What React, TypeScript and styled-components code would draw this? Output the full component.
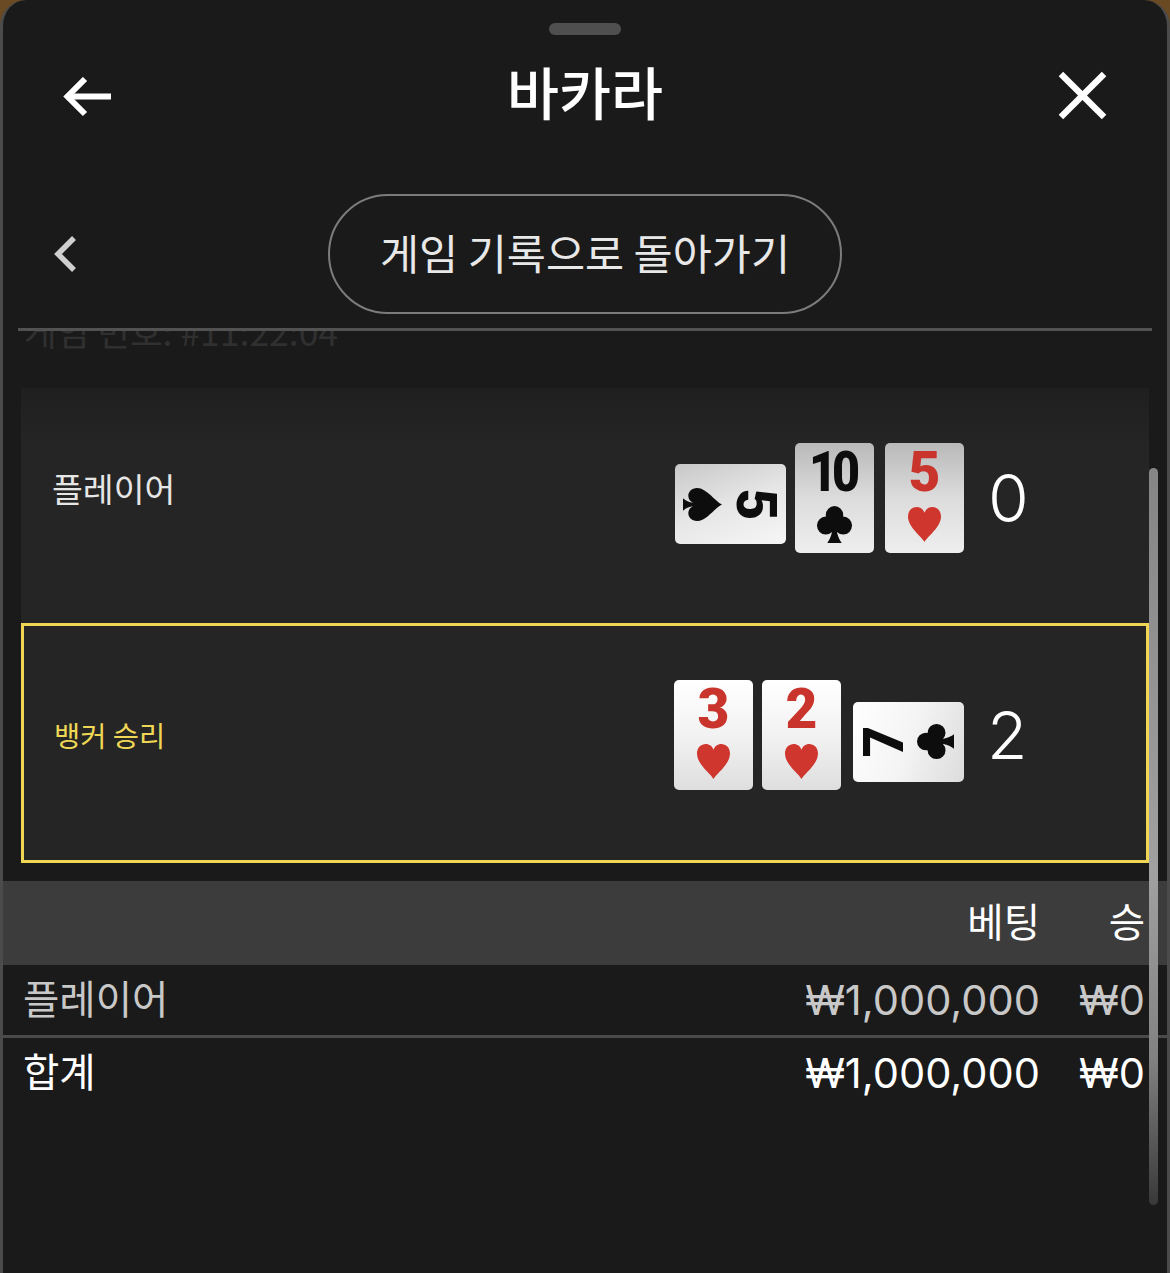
import React from 'react'
import styled, { createGlobalStyle } from 'styled-components'

const GlobalStyle = createGlobalStyle`
  html, body {
    margin: 0;
    padding: 0;
    background: #6a4a22;
    font-family: "Noto Sans CJK KR", "Noto Sans", sans-serif;
  }
  * { box-sizing: border-box; }
`

const Sheet = styled.div`
  position: relative;
  width: 1170px;
  height: 1273px;
  overflow: hidden;
  display: flex;
  flex-direction: column;
  background: #1a1a1a;
  border-left: 3px solid #4b4b4b;
  border-right: 3px solid #4b4b4b;
  border-radius: 26px 26px 0 0;
`

const Handle = styled.div`
  flex: none;
  align-self: center;
  width: 72px;
  height: 12px;
  margin-top: 23px;
  border-radius: 6px;
  background: #4f4f4f;
`

const Header = styled.header`
  flex: none;
  height: 120px;
  display: grid;
  grid-template-columns: 1fr auto 1fr;
  align-items: center;
  padding: 0 60px;
`

const Title = styled.h1`
  margin: 0 0 10px;
  font-size: 56.5px;
  line-height: 1;
  font-weight: 500;
  color: #fff;
`

const IconButton = styled.div<{ $end?: boolean }>`
  display: flex;
  justify-content: ${p => (p.$end ? 'flex-end' : 'flex-start')};
  margin-top: ${p => (p.$end ? 0 : 3)}px;
  color: #fff;
`

const BackRow = styled.div`
  flex: none;
  display: grid;
  grid-template-columns: 1fr auto 1fr;
  align-items: center;
  margin-top: 39px;
  padding: 0 50px;
`

const Chevron = styled.div`
  display: flex;
  color: #cfcfcf;
`

const BackButton = styled.div`
  width: 514px;
  height: 120px;
  display: flex;
  align-items: center;
  justify-content: center;
  padding-bottom: 6px;
  border: 2px solid #7c7c7c;
  border-radius: 60px;
  font-size: 42.5px;
  color: #e8e8e8;
`

const Divider = styled.div`
  flex: none;
  height: 3px;
  margin: 14px 15px 0;
  background: #525252;
`

const Scroll = styled.div`
  flex: 1;
  min-height: 0;
  overflow: hidden;
`

const GameNumber = styled.div`
  height: 56px;
  margin-top: -28px;
  padding-left: 21px;
  font-size: 35.5px;
  line-height: 56px;
  color: #303030;
`

const Panel = styled.div`
  margin: 29px 18px 0;
  background: linear-gradient(#1f1f1f 0, #252525 60px);
`

const Row = styled.div<{ $won?: boolean }>`
  display: flex;
  align-items: center;
  height: ${p => (p.$won ? 240 : 235)}px;
  padding-left: ${p => (p.$won ? 30 : 31)}px;
  padding-bottom: 16px;
  border: ${p => (p.$won ? '3px solid #efd755' : 'none')};
`

const RowLabel = styled.div<{ $won?: boolean }>`
  flex: 1;
  margin-top: ${p => (p.$won ? -2 : -20)}px;
  font-size: ${p => (p.$won ? 28.5 : 33.5)}px;
  color: ${p => (p.$won ? '#efd755' : '#e6e6e6')};
`

const Cards = styled.div`
  display: flex;
  align-items: center;
  gap: 9px;
`

const Card = styled.div<{ $side?: boolean; $ccw?: boolean; $dim?: boolean; $push?: number }>`
  flex: none;
  display: flex;
  align-items: center;
  justify-content: ${p => (p.$side ? 'center' : 'flex-start')};
  flex-direction: ${p => {
    if (!p.$side) return 'column'
    return p.$ccw ? 'row' : 'row-reverse'
  }};
  width: ${p => (p.$side ? 111 : 79)}px;
  height: ${p => (p.$side ? 80 : 110)}px;
  margin-left: ${p => p.$push || 0}px;
  margin-top: ${p => (p.$side ? 13 : 0)}px;
  padding-top: ${p => (p.$side ? 0 : 10)}px;
  padding-right: ${p => (p.$side && !p.$ccw ? 4 : 0)}px;
  gap: 14px;
  border-radius: 5px;
  background: ${p => {
    if (p.$dim) return p.$side
      ? 'linear-gradient(160deg, #c8c8c8 0%, #e6e6e6 50%, #f6f6f6 100%)'
      : 'linear-gradient(180deg, #b9b9b9 0%, #dcdcdc 50%, #eeeeee 100%)'
    return p.$side
      ? 'linear-gradient(110deg, #ffffff 0%, #f4f4f4 50%, #dcdcdc 100%)'
      : 'linear-gradient(180deg, #ffffff 0%, #f2f2f2 50%, #dedede 100%)'
  }};
`

const Rank = styled.span<{ $red?: boolean; $turn?: number; $wide?: boolean }>`
  display: block;
  flex: none;
  height: 39px;
  width: ${p => (p.$turn ? '39px' : 'auto')};
  text-align: center;
  font-family: Roboto, "Liberation Sans", sans-serif;
  font-size: 55px;
  line-height: 39px;
  font-weight: 900;
  letter-spacing: ${p => (p.$wide ? '-6px' : '0')};
  color: ${p => (p.$red ? '#c9352c' : '#0d0d0d')};
  ${p => (p.$turn ? `transform: translateX(${p.$turn < 0 ? 2 : 0}px) rotate(${p.$turn}deg);` : '')}
  ${p => (p.$wide ? 'transform: translateX(-3px) scaleX(0.88);' : '')}
`

const SuitBox = styled.span<{ $turn?: number }>`
  flex: none;
  display: flex;
  align-items: center;
  justify-content: center;
  width: 39px;
  height: 39px;
  margin-top: ${p => (p.$turn ? 0 : -1)}px;
  ${p => (p.$turn ? `transform: rotate(${p.$turn}deg);` : '')}
`

const Score = styled.div<{ $won?: boolean }>`
  width: ${p => (p.$won ? 182 : 185)}px;
  padding-left: ${p => (p.$won ? 23 : 24)}px;
  font-family: Inter, "Liberation Sans", sans-serif;
  font-size: 66px;
  line-height: 1;
  font-weight: 350;
  color: #fff;
`

const BetTable = styled.div`
  margin-top: 18px;
`

const TableRow = styled.div<{ $head?: boolean; $muted?: boolean }>`
  display: grid;
  grid-template-columns: 1fr auto 105px;
  align-items: center;
  height: ${p => (p.$head ? 84 : 70)}px;
  padding: 0 22px 0 20px;
  background: ${p => (p.$head ? '#3c3c3c' : '#1a1a1a')};
  font-size: 39.5px;
  color: ${p => (p.$muted ? '#c8c8c8' : '#fff')};
`

const TableRule = styled.div`
  height: 3px;
  background: #4a4a4a;
`

const Label = styled.span`
  margin-top: -8px;
`

const Amount = styled.div`
  text-align: right;
  font-family: Inter, "Liberation Sans", sans-serif;
  font-size: 41.6px;
`

const Head = styled.div`
  margin-top: -7px;
  text-align: right;
`

const ScrollThumb = styled.div`
  position: absolute;
  top: 468px;
  right: 9px;
  width: 9px;
  height: 737px;
  border-radius: 5px;
  background: linear-gradient(180deg, #858585 0%, #a0a0a0 55%, #828282 80%, #383838 100%);
`

type SuitName = 'spade' | 'club' | 'heart'

const suits: Record<SuitName, { w: number; h: number; box: string; d: string }> = {
  heart: {
    w: 33,
    h: 35,
    box: '1 1 32 31',
    d: 'M17 32 C14 27 1 19 1 9.500 C1 4 5 1 9.500 1 C13 1 15.700 3 17 6 C18.300 3 21 1 24.500 1 C29 1 33 4 33 9.500 C33 19 20 27 17 32 Z',
  },
  spade: {
    w: 33,
    h: 39,
    box: '1 1 32 33',
    d: 'M17 1 C20 7 33 14 33 22 C33 27 29 29.500 25.500 29.500 C22.500 29.500 20 28 18.700 25.500 C19 29 20.500 31.500 23 34 L11 34 C13.500 31.500 15 29 15.300 25.500 C14 28 11.500 29.500 8.500 29.500 C5 29.500 1 27 1 22 C1 14 14 7 17 1 Z',
  },
  club: {
    w: 35,
    h: 37,
    box: '0 0 34 35',
    d: 'M17 0 a8.500 8.500 0 1 0 0 17 a8.500 8.500 0 1 0 0 -17 Z M8.500 10 a8.500 8.500 0 1 0 0 17 a8.500 8.500 0 1 0 0 -17 Z M25.500 10 a8.500 8.500 0 1 0 0 17 a8.500 8.500 0 1 0 0 -17 Z M15.500 14 C15.500 23 14 30 10 35 L24 35 C20 30 18.500 23 18.500 14 Z',
  },
}

function Suit({ name, turn }: { name: SuitName; turn?: number }) {
  const s = suits[name]
  return (
    <SuitBox $turn={turn}>
      <svg width={s.w} height={s.h} viewBox={s.box} preserveAspectRatio="none">
        <path d={s.d} fill={name === 'heart' ? '#cf362e' : '#0d0d0d'} />
      </svg>
    </SuitBox>
  )
}

type CardProps = { rank: string; suit: SuitName; turn?: number; dim?: boolean; push?: number }

function PlayingCard({ rank, suit, turn, dim, push }: CardProps) {
  return (
    <Card $side={!!turn} $ccw={turn === -90} $dim={dim} $push={push}>
      <Rank $turn={turn} $red={suit === 'heart'} $wide={rank === '10'}>{rank}</Rank>
      <Suit name={suit} turn={turn} />
    </Card>
  )
}

export default function App() {
  return (
    <>
      <GlobalStyle />
      <Sheet>
        <Handle />
        <Header>
          <IconButton>
            <svg width="48" height="40" viewBox="0 0 48 40" fill="none" stroke="currentColor" strokeWidth="6">
              <path d="M48 19.500 H6" />
              <path d="M22 2 L4.500 19.500 L22 37" />
            </svg>
          </IconButton>
          <Title>바카라</Title>
          <IconButton $end>
            <svg width="49" height="49" viewBox="0 0 50 50" fill="none" stroke="currentColor" strokeWidth="6.500">
              <path d="M3 3 L47 47" />
              <path d="M47 3 L3 47" />
            </svg>
          </IconButton>
        </Header>
        <BackRow>
          <Chevron>
            <svg width="24" height="36" viewBox="0 0 24 36" fill="none" stroke="currentColor" strokeWidth="5.500">
              <path d="M21 2 L5 18 L21 34" />
            </svg>
          </Chevron>
          <BackButton>게임 기록으로 돌아가기</BackButton>
        </BackRow>
        <Divider />
        <Scroll>
          <GameNumber>게임 번호: #11:22:04</GameNumber>
          <Panel>
            <Row>
              <RowLabel>플레이어</RowLabel>
              <Cards>
                <PlayingCard rank="5" suit="spade" turn={90} dim />
                <PlayingCard rank="10" suit="club" dim />
                <PlayingCard rank="5" suit="heart" dim push={2} />
              </Cards>
              <Score>0</Score>
            </Row>
            <Row $won>
              <RowLabel $won>뱅커 승리</RowLabel>
              <Cards>
                <PlayingCard rank="3" suit="heart" />
                <PlayingCard rank="2" suit="heart" />
                <PlayingCard rank="7" suit="club" turn={-90} push={3} />
              </Cards>
              <Score $won>2</Score>
            </Row>
          </Panel>
          <BetTable>
            <TableRow $head>
              <span />
              <Head>베팅</Head>
              <Head>승</Head>
            </TableRow>
            <TableRow $muted>
              <Label>플레이어</Label>
              <Amount>₩1,000,000</Amount>
              <Amount>₩0</Amount>
            </TableRow>
            <TableRule />
            <TableRow>
              <Label>합계</Label>
              <Amount>₩1,000,000</Amount>
              <Amount>₩0</Amount>
            </TableRow>
          </BetTable>
        </Scroll>
        <ScrollThumb />
      </Sheet>
    </>
  )
}
